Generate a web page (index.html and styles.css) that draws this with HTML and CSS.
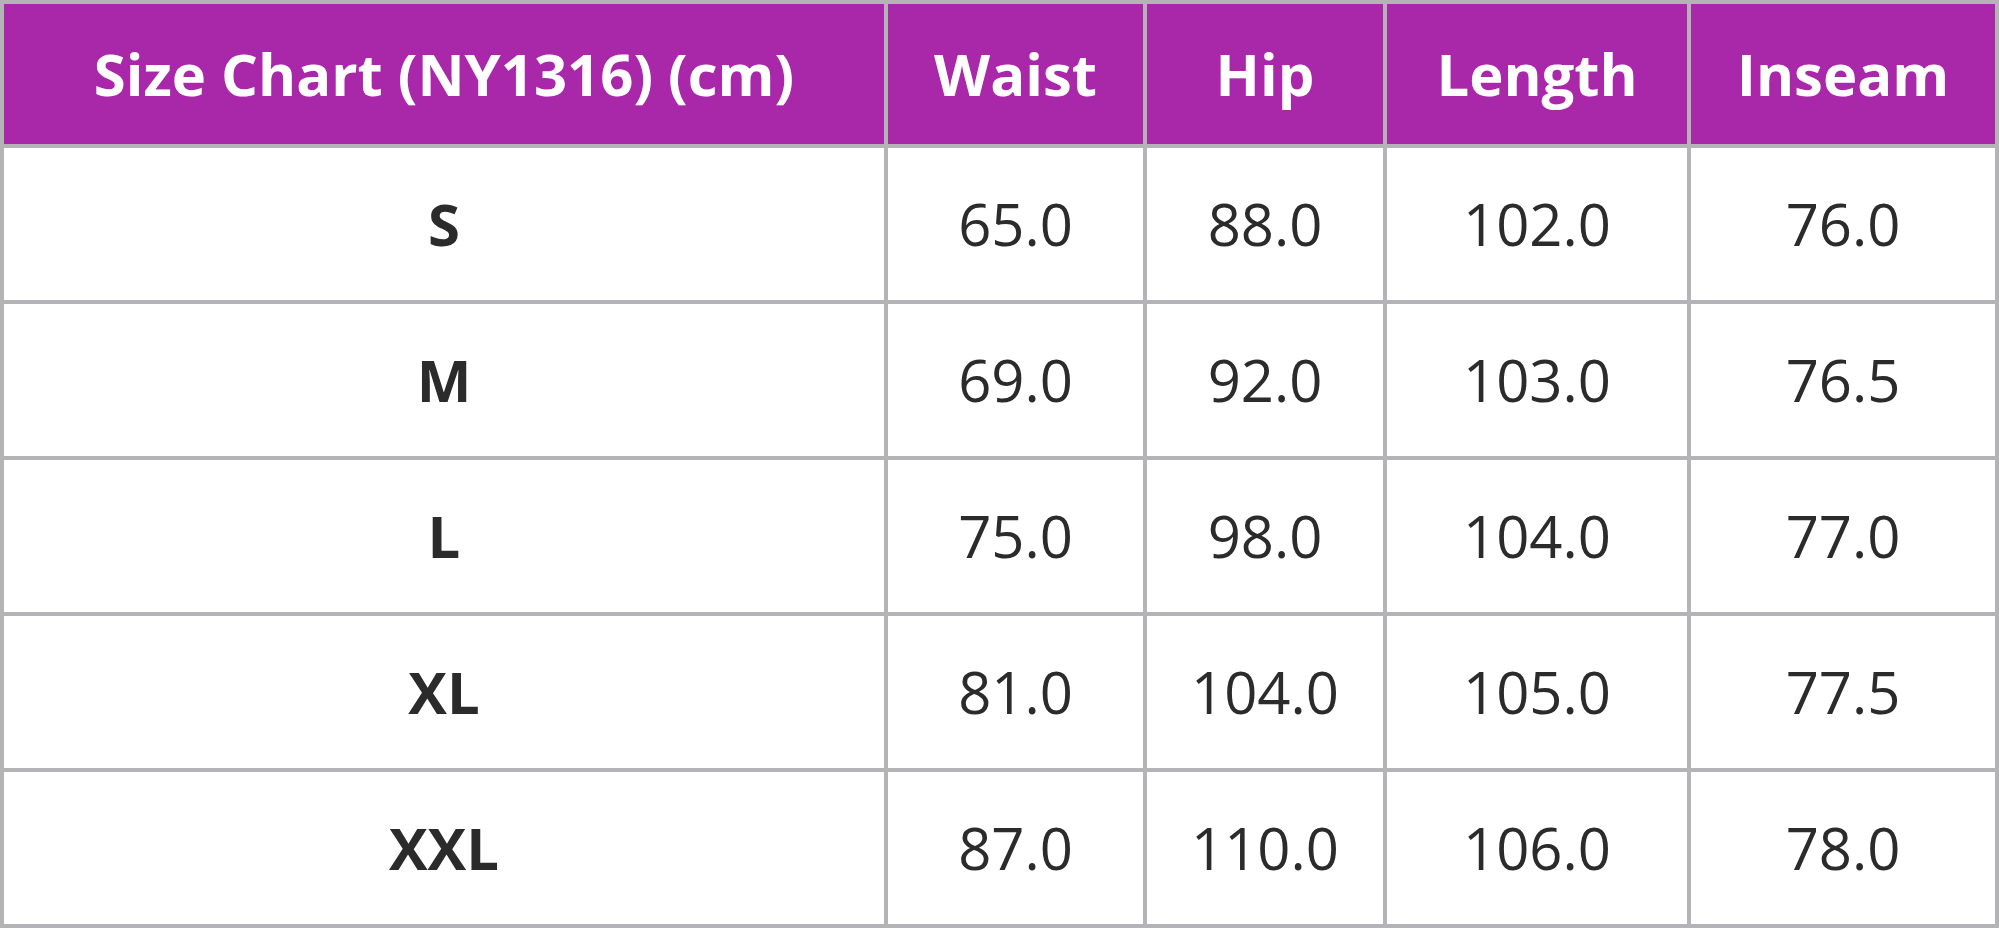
FILE: index.html
```html
<!DOCTYPE html>
<html lang="en">
<head>
<meta charset="utf-8">
<title>Size Chart (NY1316)</title>
<link rel="stylesheet" href="styles.css">
</head>
<body>
<table class="chart">
  <colgroup>
    <col class="c-size">
    <col class="c-waist">
    <col class="c-hip">
    <col class="c-length">
    <col class="c-inseam">
  </colgroup>
  <thead>
    <tr class="head-row">
      <th>Size Chart (NY1316) (cm)</th>
      <th>Waist</th>
      <th>Hip</th>
      <th>Length</th>
      <th>Inseam</th>
    </tr>
  </thead>
  <tbody>
    <tr><th class="size">S</th><td>65.0</td><td>88.0</td><td>102.0</td><td>76.0</td></tr>
    <tr><th class="size">M</th><td>69.0</td><td>92.0</td><td>103.0</td><td>76.5</td></tr>
    <tr><th class="size">L</th><td>75.0</td><td>98.0</td><td>104.0</td><td>77.0</td></tr>
    <tr><th class="size">XL</th><td>81.0</td><td>104.0</td><td>105.0</td><td>77.5</td></tr>
    <tr><th class="size">XXL</th><td>87.0</td><td>110.0</td><td>106.0</td><td>78.0</td></tr>
  </tbody>
</table>
</body>
</html>
```
FILE: styles.css
```css
html, body {
  margin: 0;
  padding: 0;
  background: #ffffff;
}

.chart {
  table-layout: fixed;
  width: 1999px;
  border-collapse: separate;
  border-spacing: 4px;
  background: #b4b3b6;
  font-family: "Open Sans", "Noto Sans", sans-serif;
  color: #2b2b2b;
}

.c-size { width: 880px; }
.c-waist { width: 255px; }
.c-hip { width: 236px; }
.c-length { width: 300px; }
.c-inseam { width: 304px; }

.chart th,
.chart td {
  padding: 0;
  text-align: center;
  vertical-align: middle;
  background: #ffffff;
  font-size: 58px;
  line-height: 1;
  white-space: nowrap;
}

.chart td {
  font-weight: 400;
}

.head-row th {
  height: 140px;
  background: #a928aa;
  color: #ffffff;
  font-weight: 700;
}

.chart tbody th,
.chart tbody td {
  height: 152px;
}

.chart .size {
  font-weight: 700;
}
```
